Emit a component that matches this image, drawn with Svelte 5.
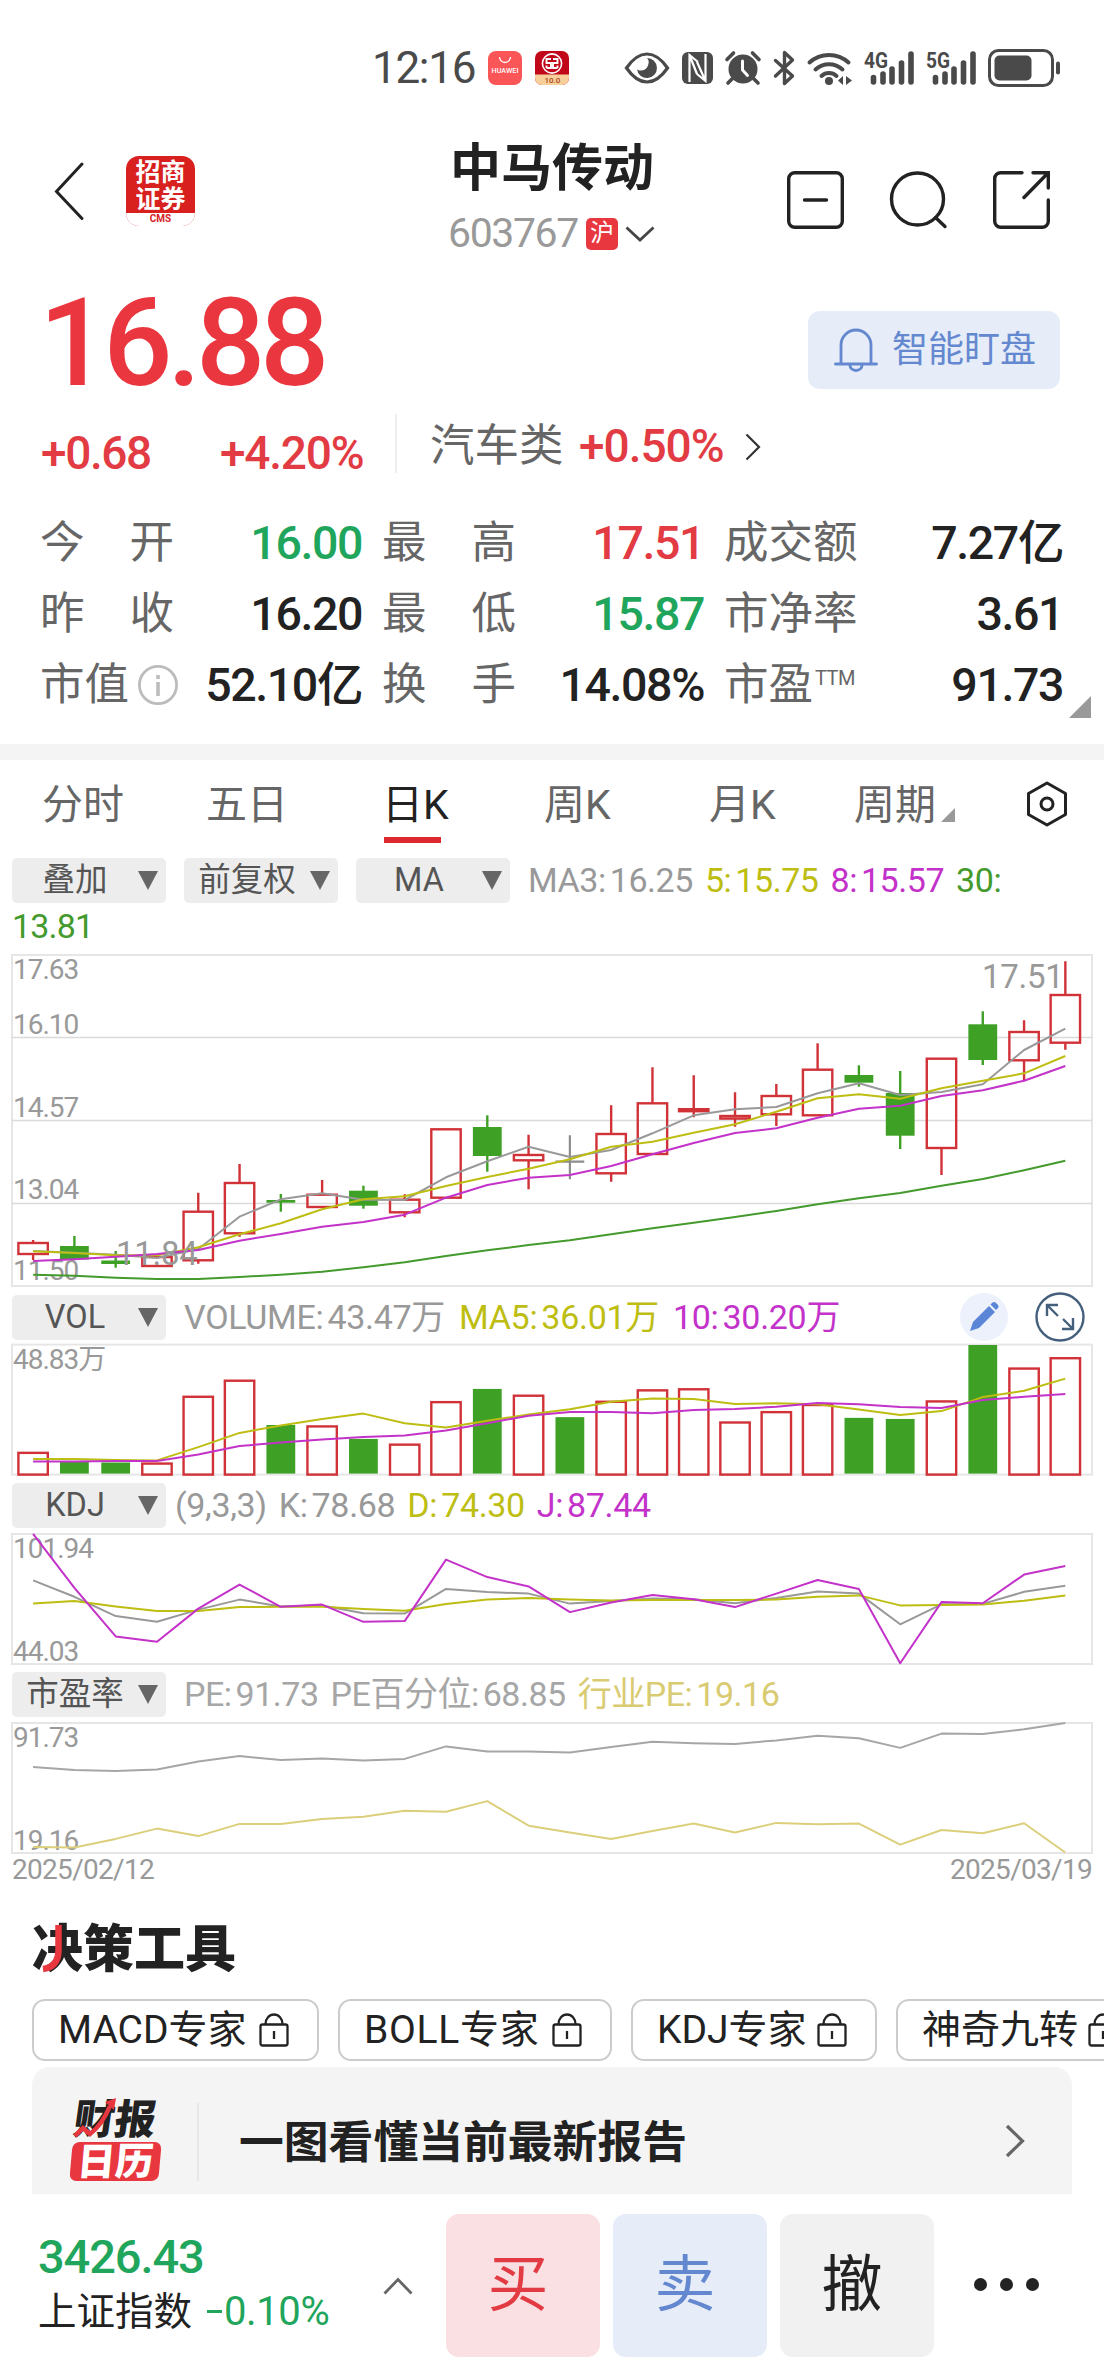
<script>
  const STEP = 41.29;
  const X0 = 33.1;
  const cx = (i) => X0 + i * STEP;

  const line = (values, map = (v) => v) =>
    values.map((v, i) => `${cx(i).toFixed(1)},${map(v).toFixed(1)}`).join(' ');
  // Indicator panes share one sub-pixel scale.
  const pane = (v) => 1330 + v / 2.8;

  // kind, body top, body bottom, wick top, wick bottom
  const candles = [
    ['up', 1243, 1254, 1240, 1260],
    ['down', 1246, 1259.5, 1236, 1259.5],
    ['down', 1260.5, 1264, 1251, 1267.7],
    ['up', 1257, 1266, 1255, 1266],
    ['up', 1211.7, 1260.3, 1192.7, 1263.7],
    ['up', 1183, 1233.3, 1164, 1236.7],
    ['down', 1200, 1202.7, 1194, 1211.7],
    ['up', 1194.7, 1207, 1180, 1207],
    ['down', 1190.7, 1205.7, 1185.7, 1208.7],
    ['up', 1199.7, 1212.3, 1194.3, 1217.3],
    ['up', 1129.3, 1197.7, 1129.3, 1197.7],
    ['down', 1127, 1156, 1115.3, 1171.7],
    ['up', 1155, 1160.3, 1134.7, 1189.3],
    ['flat', 1161.7, 1161.7, 1135.3, 1179.3],
    ['up', 1134, 1173.3, 1105.3, 1181.7],
    ['up', 1103.3, 1154, 1067.3, 1154],
    ['up', 1109.2, 1111.2, 1075.3, 1117.3],
    ['up', 1116, 1118.6, 1092.3, 1126.7],
    ['up', 1096, 1114.3, 1084, 1126],
    ['up', 1069.7, 1115.3, 1043.3, 1115.3],
    ['down', 1075, 1082.7, 1065.3, 1086.7],
    ['down', 1093, 1135.7, 1071, 1149],
    ['up', 1058.7, 1148, 1058.7, 1175],
    ['down', 1024.3, 1060, 1011.3, 1065],
    ['up', 1032, 1060.3, 1020.3, 1080.3],
    ['up', 995, 1042.7, 961.3, 1049.7]
  ];
  const ma3 = [1251, 1252.7, 1254.7, 1258, 1249, 1216.7, 1199.3, 1193.3, 1199.7, 1200, 1177.3, 1161.3, 1146.7, 1157, 1150, 1133.3, 1115.3, 1109.3, 1107, 1093.3, 1083.3, 1095, 1092, 1084.3, 1050, 1028.7];
  const ma5 = [1251.3, 1253, 1255.3, 1255.3, 1247.3, 1234.3, 1223.3, 1209.3, 1199.3, 1196.3, 1186, 1177, 1168.7, 1159.3, 1146.7, 1141.7, 1132.7, 1124.3, 1111.7, 1098.3, 1094.3, 1098.7, 1088.3, 1080.7, 1073.3, 1056];
  const ma8 = [1261, 1259.3, 1256.7, 1254, 1250, 1240.7, 1234, 1226.7, 1222, 1214.7, 1197.7, 1185, 1177.7, 1175, 1166, 1154.3, 1143, 1133, 1128.3, 1117.7, 1108.7, 1105.7, 1096, 1090.3, 1080.7, 1066];
  const ma30 = [1274.7, 1275.7, 1277.7, 1279, 1279, 1277, 1274.7, 1271.7, 1267.3, 1262.3, 1256, 1250.3, 1245, 1240.3, 1234.3, 1228.3, 1222.7, 1217, 1211, 1204.3, 1198.3, 1193, 1185.7, 1179, 1170.3, 1160.7];

  const volumes = [344, 368, 371, 374, 187, 142, 266, 270, 305, 321, 202, 165, 184, 244, 201, 169, 166, 259, 230, 210, 246, 249, 200, 42, 108, 79];
  const vol5 = [361, 361, 364, 365, 328, 288, 267, 249, 234, 261, 273, 254, 237, 222, 201, 192, 193, 207, 205, 208, 223, 238, 227, 188, 170, 136];
  const vol10 = [368, 368, 367, 367, 349, 325, 315, 307, 300, 295, 281, 261, 240, 230, 230, 233, 224, 221, 215, 204, 208, 216, 218, 196, 187, 179];
  const isDown = (i) => candles[i][0] === 'down' || candles[i][0] === 'flat';

  const kdjJ = [571, 722, 858, 873, 780, 713, 775, 769, 817, 815, 643, 692, 718, 790, 763, 742, 754, 776, 738, 700, 725, 933, 762, 765, 685, 661];
  const kdjK = [701, 747, 801, 817, 783, 755, 774, 771, 793, 794, 725, 734, 738, 766, 759, 752, 754, 765, 750, 732, 738, 824, 768, 767, 733, 716];
  const kdjD = [766, 759, 774, 787, 787, 776, 775, 775, 781, 786, 767, 755, 750, 755, 757, 756, 756, 756, 755, 747, 743, 771, 770, 769, 758, 743];

  const pe = [1224, 1232, 1235, 1231, 1208, 1193, 1204, 1200, 1205, 1201, 1166, 1180, 1180, 1183, 1168, 1153, 1157, 1159, 1149, 1136, 1143, 1170, 1130, 1131, 1118, 1100];
  const industryPe = [1448, 1449, 1425, 1396, 1417, 1383, 1383, 1369, 1363, 1346, 1349, 1319, 1388, 1407, 1425, 1403, 1382, 1407, 1380, 1384, 1382, 1441, 1400, 1409, 1381, 1463];

  const stats = [
    [
      { label: ['今', '开'], value: '16.00', tone: 'green' },
      { label: ['最', '高'], value: '17.51', tone: 'red' },
      { label: ['成交额'], value: '7.27亿' }
    ],
    [
      { label: ['昨', '收'], value: '16.20' },
      { label: ['最', '低'], value: '15.87', tone: 'green' },
      { label: ['市净率'], value: '3.61' }
    ],
    [
      { label: ['市值'], value: '52.10亿', info: true },
      { label: ['换', '手'], value: '14.08%' },
      { label: ['市盈'], sup: 'TTM', value: '91.73' }
    ]
  ];

  const tabs = ['分时', '五日', '日K', '周K', '月K', '周期'];
  const chips = [
    { text: 'MACD专家', width: 287 },
    { text: 'BOLL专家', width: 274 },
    { text: 'KDJ专家', width: 246 },
    { text: '神奇九转', width: 252 }
  ];
</script>

{#snippet selector(text)}
  <button class="selector"><span>{text}</span><i></i></button>
{/snippet}

{#snippet legend(label, value, tone)}
  <span class="legend {tone}">{label}{#if value}<b>{value}</b>{/if}</span>
{/snippet}

{#snippet signal(label)}
  <svg class="signal" width="51" height="36" viewBox="0 0 51 36">
    <text x="0" y="18" font-size="22" font-weight="700" textLength="24" lengthAdjust="spacingAndGlyphs">{label}</text>
    <g stroke="#4a4a4a" stroke-width="5.6" stroke-linecap="round">
      <path d="M9.5 27.5V32M19 24V32M28 19V32M37.5 13V32M47 4V32" />
    </g>
  </svg>
{/snippet}

<main>
  <div class="status">
    <div class="clock">12:16</div>
    <svg class="app1" width="34" height="34" viewBox="0 0 34 34">
      <rect width="34" height="34" rx="8" fill="#fa5557" />
      <path d="M11.500 6a5.500 5.500 0 0 0 11 0" fill="none" stroke="#fff" stroke-width="1.300" />
      <text x="3.500" y="22" font-size="7.200" font-weight="500" textLength="27">HUAWEI</text>
    </svg>
    <svg class="app2" width="34" height="34" viewBox="0 0 34 34">
      <rect width="34" height="34" rx="7" fill="#c0081a" />
      <path d="M0 23.500h34V27a7 7 0 0 1-7 7H7a7 7 0 0 1-7-7z" fill="#f6cf9a" />
      <circle cx="17" cy="12.500" r="9.600" fill="none" stroke="#fff" stroke-width="1.600" />
      <path d="M16 8h-4.500v4H16v5h-4.500M18 8h4.500v4H18v5h4.500M11.500 14.500v2.500M22.500 14.500v2.500" fill="none" stroke="#fff" stroke-width="1.900" />
      <text x="9.500" y="31.500" font-size="8" font-weight="500">10.0</text>
    </svg>
    <svg class="eye" width="46" height="32" viewBox="0 0 46 32">
      <path d="M2.500 16C9 6.500 15.500 2 23 2s14 4.500 20.500 14C37 25.500 30.500 30 23 30S9 25.500 2.500 16z" fill="none" stroke="#4a4a4a" stroke-width="3.200" />
      <path d="M23 6a10 10 0 1 1-10 11c2 2.500 8 2 10-1.500s2.500-7 0-9.500z" fill="#4a4a4a" />
    </svg>
    <svg class="nfc" width="31" height="32" viewBox="0 0 31 32">
      <rect width="31" height="32" rx="6" fill="#4a4a4a" />
      <path d="M7.500 30V3L16 10M7.500 3L15 22M23.500 2V29L15 22M23.500 29L15 10" fill="none" stroke="#fff" stroke-width="2.200" />
    </svg>
    <svg class="alarm" width="36" height="34" viewBox="0 0 36 34">
      <circle cx="18" cy="18" r="14.500" fill="#4a4a4a" />
      <path d="M2 8.500L8.500 2M34 8.500L27.500 2M7 28l-4 4M29 28l4 4" stroke="#4a4a4a" stroke-width="3.600" stroke-linecap="round" />
      <path d="M17.500 10v9l5 5.500" fill="none" stroke="#fff" stroke-width="3" stroke-linecap="round" />
    </svg>
    <svg class="bt" width="23" height="36" viewBox="0 0 23 36">
      <path d="M2.500 10.500L19.500 26 11.500 33.500V2.500L19.500 10 2.500 26" fill="none" stroke="#4a4a4a" stroke-width="3.400" stroke-linejoin="round" stroke-linecap="round" />
    </svg>
    <svg class="wifi" width="46" height="36" viewBox="0 0 46 36">
      <path d="M2.500 12.500a29 29 0 0 1 39 0M8.500 19.500a20 20 0 0 1 27 0M14.500 26a11 11 0 0 1 15 0" fill="none" stroke="#4a4a4a" stroke-width="4" stroke-linecap="round" />
      <circle cx="22" cy="31" r="4" fill="#4a4a4a" />
      <path d="M36 26v9l-5-4.500zM39 26v9l6-4.500z" fill="#4a4a4a" />
    </svg>
    {@render signal('4G')}
    {@render signal('5G')}
    <svg class="battery" width="73" height="38" viewBox="0 0 73 38">
      <rect x="1.500" y="1.500" width="63" height="35" rx="9" fill="none" stroke="#4a4a4a" stroke-width="3" />
      <rect x="6.500" y="6.500" width="37" height="25" rx="5" fill="#4a4a4a" />
      <path d="M70 14.500v9" stroke="#4a4a4a" stroke-width="4" stroke-linecap="round" />
    </svg>
  </div>

  <header>
    <svg class="back" width="34" height="70" viewBox="0 0 34 70">
      <path d="M30 8L4.500 35.500 30 62.500" fill="none" stroke="#222" stroke-width="3" stroke-linecap="round" />
    </svg>
    <div class="broker">
      <div class="broker-name"><span>招商</span><span>证券</span></div>
      <div class="broker-code">CMS</div>
    </div>
    <div class="name">
      <h1>中马传动</h1>
      <div class="code">
        <span>603767</span><em>沪</em>
        <svg width="30" height="16" viewBox="0 0 30 16"><path d="M1.500 1.500L15 14 28.500 1.500" fill="none" stroke="#444" stroke-width="2.800" /></svg>
      </div>
    </div>
    <div class="actions">
      <svg width="57" height="58" viewBox="0 0 57 58" fill="none" stroke="#222" stroke-width="3.400" stroke-linecap="round">
        <rect x="1.700" y="1.700" width="53.600" height="54.600" rx="6" /><path d="M17.500 29h22" />
      </svg>
      <svg width="57" height="58" viewBox="0 0 57 58" fill="none" stroke="#222" stroke-width="3.400" stroke-linecap="round">
        <circle cx="27.500" cy="28" r="26" /><path d="M45.500 46.500l9.500 9" />
      </svg>
      <svg width="57" height="58" viewBox="0 0 57 58" fill="none" stroke="#222" stroke-width="3.400" stroke-linecap="round">
        <path d="M29 1.700H8a6 6 0 0 0-6.300 6V50a6 6 0 0 0 6.300 6.300h41a6 6 0 0 0 6.300-6.300V29M40 1.700h15.300V17M55 2L31 26.500" />
      </svg>
    </div>
  </header>

  <div class="price">
    <strong>16.88</strong>
    <button class="watch">
      <svg width="44" height="46" viewBox="0 0 44 46" fill="none" stroke="#6488cf" stroke-width="2.800" stroke-linecap="round">
        <path d="M7 37V18a15 15 0 0 1 30 0v19M1.500 37h41M16 38.500a6 5 0 0 0 12 0" />
      </svg>
      <span>智能盯盘</span>
    </button>
  </div>

  <div class="change">
    <span class="delta red">+0.68</span>
    <span class="percent red">+4.20%</span>
    <i class="rule"></i>
    <div class="sector">
      <span>汽车类</span><b class="red">+0.50%</b>
      <svg width="16" height="28" viewBox="0 0 16 28"><path d="M1.500 1.500L14 14 1.500 26.500" fill="none" stroke="#333" stroke-width="2.200" /></svg>
    </div>
  </div>

  <div class="stats">
    {#each stats as row}
      {#each row as cell}
        <div class="cell">
          <span class="label">
            {#each cell.label as part}<span>{part}</span>{/each}
            {#if cell.sup}<small>{cell.sup}</small>{/if}
            {#if cell.info}
              <svg width="42" height="42" viewBox="0 0 42 42" fill="none" stroke="#bcbcbc" stroke-width="2.800">
                <circle cx="21" cy="21" r="18.600" /><path d="M21 18v14M21 11v4" stroke-width="3.600" />
              </svg>
            {/if}
          </span>
          <b class={cell.tone}>{cell.value}</b>
        </div>
      {/each}
    {/each}
    <i class="more"></i>
  </div>

  <div class="band"></div>

  <nav>
    {#each tabs as tab}
      <span class:active={tab === '日K'}>{tab}</span>
    {/each}
    <i class="tri"></i>
    <svg width="44" height="48" viewBox="0 0 44 48" fill="none" stroke="#222" stroke-width="3" stroke-linejoin="round">
      <path d="M22 3l18.500 10.500v21L22 45 3.500 34.500v-21z" /><circle cx="22" cy="24" r="6" />
    </svg>
  </nav>

  <div class="tools main-tools">
    {@render selector('叠加')}
    {@render selector('前复权')}
    {@render selector('MA')}
    {@render legend('MA3:', '16.25', 'gray')}
    {@render legend('5:', '15.75', 'olive')}
    {@render legend('8:', '15.57', 'purple')}
    {@render legend('30:', '', 'forest')}
  </div>
  <div class="wrapped forest">13.81</div>

  <svg class="chart" width="1104" height="344" viewBox="0 949 1104 344">
    <rect class="frame" x="12" y="955" width="1080" height="331" />
    <path class="grid" d="M12 1037.500H1092M12 1120.500H1092M12 1203.500H1092" />
    <g class="axis">
      <text x="13" y="979">17.63</text>
      <text x="13" y="1034">16.10</text>
      <text x="13" y="1116.500">14.57</text>
      <text x="13" y="1198.500">13.04</text>
      <text x="13" y="1280">11.50</text>
    </g>
    {#each candles as [kind, top, bottom, high, low], i}
      {#if kind === 'up'}
        <path class="up" d="M{cx(i)} {high}V{top}M{cx(i)} {bottom}V{low}" />
        <rect class="up" x={cx(i) - 14.7} y={top} width="29.400" height={bottom - top} />
      {:else if kind === 'down'}
        <path class="down-wick" d="M{cx(i)} {high}V{low}" />
        <rect class="down" x={cx(i) - 14.4} y={top} width="28.800" height={bottom - top} />
      {:else}
        <path class="flat" d="M{cx(i)} {high}V{low}M{cx(i) - 14.4} {top}h28.800" />
      {/if}
    {/each}
    <polyline class="l-gray" points={line(ma3)} />
    <polyline class="l-olive" points={line(ma5)} />
    <polyline class="l-purple" points={line(ma8)} />
    <polyline class="l-forest" points={line(ma30)} />
    <g class="mark">
      <text x="116" y="1265">11.84</text>
      <text x="982" y="988">17.51</text>
    </g>
  </svg>

  <div class="tools vol">
    {@render selector('VOL')}
    {@render legend('VOLUME:', '43.47万', 'gray')}
    {@render legend('MA5:', '36.01万', 'olive')}
    {@render legend('10:', '30.20万', 'purple')}
    <svg class="pencil" width="48" height="48" viewBox="0 0 48 48">
      <circle cx="24" cy="24" r="24" fill="#edf1fb" />
      <path d="M10 38l3-9L29 13l6 6-16 16zM30.500 11.500l2-2q1.500-1 3 0l2.500 2.500q1.200 1.500 0 3l-2 2z" fill="#5b85d6" />
    </svg>
    <svg class="expand" width="50" height="50" viewBox="0 0 50 50" fill="none" stroke="#45607d" stroke-width="2.400">
      <circle cx="25" cy="25" r="23.500" /><path d="M12 24V13h11M12.500 13.500L23 24M38 26v11H27M37.500 36.500L28 27" />
    </svg>
  </div>

  <svg class="chart" width="1104" height="140" viewBox="0 1341 1104 140">
    <rect class="frame" x="12" y="1344.600" width="1080" height="130" />
    <text class="axis" x="13" y="1369">48.83万</text>
    {#each volumes as v, i}
      {#if isDown(i)}
        <rect class="down" x={cx(i) - 14.4} y={pane(v)} width="28.800" height={1473.6 - pane(v)} />
      {:else}
        <rect class="up" x={cx(i) - 14.7} y={pane(v)} width="29.400" height={1474.6 - pane(v)} />
      {/if}
    {/each}
    <polyline class="l-olive" points={line(vol5, pane)} />
    <polyline class="l-purple" points={line(vol10, pane)} />
  </svg>

  <div class="tools kdj">
    {@render selector('KDJ')}
    {@render legend('(9,3,3)', '', 'gray')}
    {@render legend('K:', '78.68', 'gray')}
    {@render legend('D:', '74.30', 'olive')}
    {@render legend('J:', '87.44', 'purple')}
  </div>

  <svg class="chart" width="1104" height="140" viewBox="0 1529 1104 140">
    <rect class="frame" x="12" y="1534" width="1080" height="130" />
    <g class="axis">
      <text x="13" y="1558">101.94</text>
      <text x="13" y="1661">44.03</text>
    </g>
    <polyline class="l-gray" points={line(kdjK, pane)} />
    <polyline class="l-olive" points={line(kdjD, pane)} />
    <polyline class="l-purple" points={line(kdjJ, pane)} />
  </svg>

  <div class="tools pe">
    {@render selector('市盈率')}
    {@render legend('PE:', '91.73', 'light')}
    {@render legend('PE百分位:', '68.85', 'light')}
    {@render legend('行业PE:', '19.16', 'sand')}
  </div>

  <svg class="chart" width="1104" height="139" viewBox="0 1719 1104 139">
    <rect class="frame" x="12" y="1723" width="1080" height="130" />
    <g class="axis">
      <text x="13" y="1747">91.73</text>
      <text x="13" y="1850">19.16</text>
    </g>
    <polyline class="l-light" points={line(pe, pane)} />
    <polyline class="l-sand" points={line(industryPe, pane)} />
  </svg>

  <div class="dates"><span>2025/02/12</span><span>2025/03/19</span></div>

  <h2>
    决策工具
    <svg width="30" height="50" viewBox="0 0 30 50"><path d="M19.500 1V26Q19.500 43 4 45" fill="none" stroke="#e8373f" stroke-width="6.500" /></svg>
  </h2>

  <div class="chips">
    {#each chips as chip}
      <button class="chip" style:width="{chip.width}px">
        <span>{chip.text}</span>
        <svg width="30" height="34" viewBox="0 0 30 34" fill="none" stroke="#222" stroke-width="2.300">
          <rect x="1.500" y="11.500" width="27" height="21" rx="2" /><path d="M6.500 11a8.500 9.500 0 0 1 17 0M15 18v8" />
        </svg>
      </button>
    {/each}
  </div>

  <section class="report">
    <div class="calendar">
      <div class="cal-top">财报</div>
      <div class="cal-bottom">日历</div>
      <svg width="50" height="44" viewBox="0 0 50 44">
        <path d="M4 38l8-8 7 6Q31 27 39 8" fill="none" stroke="#e8373f" stroke-width="4.500" /><path d="M34 4L45 0 43 12z" fill="#e8373f" />
      </svg>
    </div>
    <i></i>
    <strong>一图看懂当前最新报告</strong>
    <svg width="20" height="34" viewBox="0 0 20 34"><path d="M2 2L17.500 17 2 32" fill="none" stroke="#666" stroke-width="3.200" /></svg>
  </section>

  <footer>
    <div class="index">
      <div class="points">3426.43</div>
      <div class="index-name">上证指数 <span><u></u>0.10%</span></div>
    </div>
    <svg class="caret" width="30" height="18" viewBox="0 0 30 18"><path d="M1.500 16.500L15 2.500 28.500 16.500" fill="none" stroke="#666" stroke-width="2.800" /></svg>
    <button class="buy">买</button>
    <button class="sell">卖</button>
    <button class="cancel">撤</button>
    <div class="dots"><i></i><i></i><i></i></div>
  </footer>
</main>

<style>
  :global(body) {
    background: #fff;
  }
  main {
    width: 1104px;
    height: 2376px;
    overflow: hidden;
    background: #fff;
    color: #222;
    font-family: Roboto, 'Noto Sans CJK SC', sans-serif;
    line-height: 1.2;
  }
  svg {
    display: block;
    flex: none;
    overflow: visible;
  }
  button {
    padding: 0;
    border: 0;
    font: inherit;
    color: inherit;
  }
  h1, h2 {
    margin: 0;
  }
  .red { color: #e23b43; }
  .green { color: #1fa65c; }
  .gray { color: #999; }
  .light { color: #a6a6a6; }
  .olive { color: #bdbd12; }
  .purple { color: #c332c9; }
  .forest { color: #449a2c; }
  .sand { color: #d9cb72; }

  .status {
    display: flex;
    align-items: center;
    height: 136px;
    padding-left: 372px;
    box-sizing: border-box;
    color: #4a4a4a;
  }
  .status text { fill: #4a4a4a; }
  .status .app1 text { fill: #fff; }
  .status .app2 text { fill: #b0491c; }
  .clock {
    width: 116px;
    font-size: 44px;
    letter-spacing: -1.300px;
    white-space: nowrap;
  }
  .app2 { margin-left: 13px; }
  .eye { margin-left: 55px; }
  .nfc { margin-left: 12px; }
  .alarm { margin-left: 12px; }
  .bt { margin-left: 12px; }
  .wifi { margin-left: 11px; }
  .signal { margin-left: 11px; }
  .battery { margin-left: 11px; }

  header {
    display: flex;
    align-items: flex-start;
    height: 134px;
    padding: 20px 54px 0 52px;
    box-sizing: border-box;
  }
  .broker {
    width: 69px;
    height: 70px;
    margin-left: 40px;
    border-radius: 13px;
    overflow: hidden;
    background: #d8201f;
    color: #fff;
    text-align: center;
  }
  .broker-name {
    display: flex;
    flex-direction: column;
    height: 57px;
    padding-top: 3px;
    box-sizing: border-box;
    font-size: 25px;
    line-height: 27px;
    font-weight: 700;
  }
  .broker-code {
    height: 13px;
    background: #fff;
    color: #d8201f;
    font-size: 10px;
    line-height: 12px;
    font-weight: 700;
  }
  .name {
    width: 206px;
    margin: -17px 0 0 255px;
  }
  h1 {
    height: 59px;
    font-size: 51px;
    line-height: 59px;
    font-weight: 700;
    white-space: nowrap;
  }
  .code {
    display: flex;
    align-items: center;
    height: 71px;
    margin-left: -2px;
  }
  .code span {
    width: 138px;
    color: #999;
    font-size: 41px;
    letter-spacing: -1.400px;
  }
  .code em {
    width: 32px;
    height: 32px;
    margin-right: 7px;
    border-radius: 5px;
    background: #e8373f;
    color: #fff;
    font-size: 24px;
    line-height: 31px;
    font-style: normal;
    text-align: center;
  }
  .actions {
    display: flex;
    gap: 46px;
    margin: 15px 0 0 auto;
  }

  .price {
    display: flex;
    align-items: center;
    justify-content: space-between;
    height: 143px;
    padding: 0 44px 0 39px;
  }
  .price strong {
    padding-top: 3px;
    color: #ea363e;
    font-size: 122px;
    line-height: 143px;
    font-weight: 500;
    letter-spacing: -5.200px;
  }
  .watch {
    display: flex;
    align-items: center;
    width: 252px;
    height: 78px;
    margin-top: 17px;
    padding-left: 26px;
    box-sizing: border-box;
    border-radius: 12px;
    background: #e6ecf8;
    color: #6488cf;
    font-size: 36px;
  }
  .watch span { margin-left: 14px; padding-top: 1px; white-space: nowrap; }

  .change {
    display: flex;
    align-items: center;
    height: 81px;
    padding-left: 41px;
    margin-bottom: 14px;
    font-size: 46px;
    font-weight: 500;
  }
  .delta { width: 179px; letter-spacing: -1.400px; }
  .percent { width: 175px; letter-spacing: -1.200px; white-space: nowrap; }
  .rule {
    width: 2px;
    height: 59px;
    margin-bottom: 20px;
    background: #eee;
  }
  .sector {
    display: flex;
    align-items: center;
    margin-left: 33px;
    padding-bottom: 14px;
  }
  .sector span {
    width: 149px;
    color: #666;
    font-size: 44.500px;
    font-weight: 400;
  }
  .sector b { width: 166px; font-weight: 500; letter-spacing: -1px; }

  .stats {
    position: relative;
    display: grid;
    grid-template-columns: 322px 322px 339px;
    grid-auto-rows: 71px;
    column-gap: 20px;
    height: 236px;
    padding-left: 40px;
    box-sizing: border-box;
  }
  .cell {
    display: flex;
    align-items: center;
    justify-content: space-between;
  }
  .cell b {
    font-size: 46.500px;
    font-weight: 500;
    letter-spacing: -1.400px;
    white-space: nowrap;
  }
  .label {
    display: flex;
    align-items: center;
    justify-content: space-between;
    width: 134px;
    color: #666;
    font-size: 44.500px;
    white-space: nowrap;
  }
  .label small {
    margin: -14px auto 0 2px;
    font-size: 20px;
    line-height: 24px;
    letter-spacing: -0.500px;
  }
  .label svg { margin-right: -5px; }
  .more {
    position: absolute;
    right: 13px;
    top: 188px;
    border: 11px solid transparent;
    border-right-color: #999;
    border-bottom-color: #999;
  }
  .band { height: 16px; background: #f4f4f4; }

  nav {
    display: grid;
    grid-template-columns: 164px 176px 162px 165px 145px 87px 84px 44px;
    align-items: center;
    height: 88px;
    margin-bottom: 9px;
    padding-left: 42px;
    color: #666;
    font-size: 41px;
    white-space: nowrap;
  }
  nav span { padding-top: 3px; }
  nav .active {
    position: relative;
    color: #222;
  }
  .active::after {
    content: '';
    position: absolute;
    left: 2px;
    bottom: -13px;
    width: 57px;
    height: 6px;
    background: #de2a2e;
  }
  .tri {
    justify-self: start;
    margin-top: 22px;
    border: 7.500px solid transparent;
    border-right-color: #999;
    border-bottom-color: #999;
  }

  .tools {
    display: flex;
    align-items: center;
    height: 48px;
    padding-left: 12px;
    font-size: 34px;
    white-space: nowrap;
  }
  .tools.main-tools { height: 46px; }
  .tools.pe { height: 50px; }
  .selector {
    display: flex;
    align-items: center;
    justify-content: space-between;
    width: 154px;
    height: 45px;
    margin-right: 18px;
    padding: 0 8px 0 0;
    box-sizing: border-box;
    border-radius: 5px;
    background: #ededed;
    color: #555;
    font-size: 32.500px;
  }
  .selector span {
    flex: 1;
    text-align: center;
  }
  .selector i {
    border: 10px solid transparent;
    border-top: 19px solid #666;
    border-bottom: 0;
  }
  .legend { margin-right: 12px; letter-spacing: -0.450px; }
  .legend b { margin-left: 4px; font-weight: 400; }
  .vol .legend { margin-right: 14px; letter-spacing: -0.300px; }
  .kdj .legend { letter-spacing: -0.350px; }
  .kdj .selector { margin-right: 9px; }
  .pe .legend { letter-spacing: -0.480px; }
  .vol .pencil { margin-left: auto; }
  .vol .expand { margin: 0 19px 0 27px; }
  .wrapped {
    height: 46px;
    padding-left: 12px;
    font-size: 34px;
    line-height: 47px;
    letter-spacing: -0.800px;
  }

  .frame { fill: none; stroke: #e6e6e6; stroke-width: 2; }
  .grid { stroke: #dadada; stroke-width: 1.500; }
  .axis { fill: #999; font-size: 28px; letter-spacing: -1px; }
  .mark { fill: #999; font-size: 33px; letter-spacing: -0.300px; }
  .up { fill: none; stroke: #d03238; stroke-width: 2.400; }
  .down { fill: #3ea126; }
  .down-wick { stroke: #3ea126; stroke-width: 2.400; }
  .flat { stroke: #8d8d8d; stroke-width: 2.200; }
  polyline { fill: none; stroke-width: 2; stroke-linejoin: round; }
  .l-gray { stroke: #999; }
  .l-light { stroke: #a6a6a6; }
  .l-olive { stroke: #bdbd12; }
  .l-purple { stroke: #c332c9; }
  .l-forest { stroke: #449a2c; }
  .l-sand { stroke: #dccf7c; }

  .dates {
    display: flex;
    justify-content: space-between;
    padding: 0 12px;
    color: #999;
    font-size: 28px;
    line-height: 24px;
    letter-spacing: -0.700px;
  }

  h2 {
    position: relative;
    height: 80px;
    margin-top: 27px;
    padding-left: 32px;
    font-size: 51px;
    line-height: 82px;
    font-weight: 900;
  }
  h2 svg {
    position: absolute;
    left: 39px;
    top: 15px;
  }

  .chips {
    display: flex;
    gap: 19px;
    margin-top: 10px;
    padding-left: 32px;
  }
  .chip {
    display: flex;
    flex: none;
    align-items: center;
    justify-content: space-between;
    height: 62px;
    padding: 0 28px 0 24px;
    border: 2px solid #ccc;
    border-radius: 13px;
    background: #fff;
    font-size: 39px;
    white-space: nowrap;
    box-sizing: border-box;
  }
  .chip span { padding-top: 1px; }
  .chip:nth-child(2) span { letter-spacing: 0.700px; }

  .report {
    display: flex;
    align-items: center;
    height: 127px;
    margin: 6px 32px 0;
    padding: 0 47px 0 39px;
    box-sizing: border-box;
    border-radius: 18px 18px 0 0;
    background: #f4f4f4;
  }
  .calendar {
    position: relative;
    width: 89px;
    margin-top: 18px;
  }
  .cal-top {
    height: 44px;
    padding-left: 3px;
    font-size: 41px;
    line-height: 44px;
    font-weight: 900;
    transform: skewX(-8deg);
  }
  .cal-bottom {
    height: 39px;
    border-radius: 7px;
    background: #e8373f;
    color: #fff;
    font-size: 38px;
    line-height: 40px;
    font-weight: 900;
    text-align: center;
    transform: skewX(-5deg);
  }
  .calendar svg {
    position: absolute;
    left: 0;
    top: 0;
  }
  .report i {
    width: 2px;
    height: 78px;
    margin: 22px 40px 0 37px;
    background: #e8e8e8;
  }
  .report strong {
    margin-top: 24px;
    font-size: 44.800px;
    line-height: 60px;
    font-weight: 700;
  }
  .report > svg { margin: 20px 0 0 auto; }

  footer {
    display: flex;
    height: 143px;
    padding: 20px 0 0 38px;
  }
  .index {
    width: 345px;
    padding-top: 15px;
    white-space: nowrap;
  }
  .points {
    height: 54px;
    color: #1fa65c;
    font-size: 47px;
    line-height: 55px;
    font-weight: 500;
    letter-spacing: -1.100px;
  }
  .index-name {
    display: flex;
    align-items: center;
    font-size: 38.500px;
    line-height: 57px;
  }
  .index-name span {
    display: flex;
    align-items: center;
    margin-left: 15px;
    color: #1fa65c;
    font-size: 40px;
    letter-spacing: -0.400px;
  }
  .index-name u {
    width: 15px;
    height: 3px;
    margin-right: 2px;
    background: #1fa65c;
  }
  .caret { margin: 63px 33px 0 0; }
  footer button {
    width: 154px;
    height: 143px;
    margin-right: 13px;
    padding: 1px 10px 0 0;
    box-sizing: border-box;
    border-radius: 13px;
    font-size: 61px;
    text-align: center;
  }
  .buy { background: #fae0e2; color: #e23b43; }
  .sell { background: #e6ecf8; color: #6488cf; }
  .cancel { background: #f1f1f1; }
  .dots {
    display: flex;
    gap: 13px;
    padding: 64px 0 0 27px;
  }
  .dots i {
    width: 13px;
    height: 13px;
    border-radius: 50%;
    background: #222;
  }
</style>
